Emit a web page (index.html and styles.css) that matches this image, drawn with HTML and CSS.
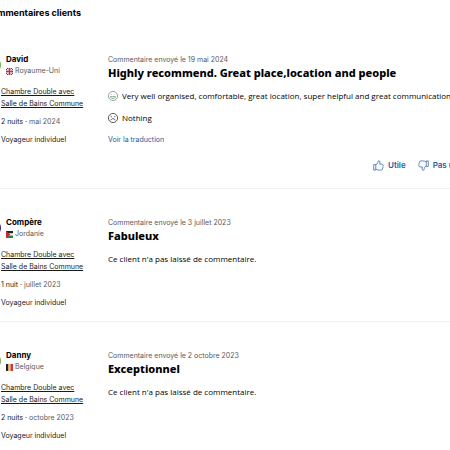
FILE: index.html
```html
<!DOCTYPE html>
<html lang="fr">
<head>
<meta charset="utf-8">
<title>Commentaires clients</title>
<link rel="stylesheet" href="styles.css">
</head>
<body>
<svg class="defs" aria-hidden="true">
  <symbol id="bed" viewBox="0 0 24 24"><path d="M2 19v-7h20v7M4 12V5h16v7M2 16h20"/></symbol>
  <symbol id="calendar" viewBox="0 0 24 24"><path d="M3 5h18v16H3zM3 10h18M8 2v5M16 2v5"/></symbol>
  <symbol id="person" viewBox="0 0 24 24"><circle cx="12" cy="7" r="5"/><path d="M3 22c0-10 18-10 18 0"/></symbol>
  <symbol id="happy" viewBox="0 0 24 24"><circle cx="12" cy="12" r="11"/><path d="M6 13.500h12c-.5 6-11.500 6-12 0zM8 8v1M16 8v1"/></symbol>
  <symbol id="sad" viewBox="0 0 24 24"><circle cx="12" cy="12" r="11"/><path d="M7 17.500c1-5 9-5 10 0M6.500 8l3 1.500M17.500 8l-3 1.500"/></symbol>
  <symbol id="thumb" viewBox="0 0 24 24"><path d="M1.500 10H6v12H1.500zM6 20c3 1.500 5 2 8 2h4c3 0 3.500-3 2.500-4 2-1 2-3 1-4 1.500-1.500 1-5-2-5h-5c1-3 1-7-1.500-7.500-2-.3-2 1.500-2.500 3.500C10 8 8 10 6 11"/></symbol>
</svg>
<main class="page">
  <h1 class="heading">Commentaires clients</h1>

  <article class="review">
    <div class="guest">
      <div class="profile">
        <span class="avatar green"></span>
        <div>
          <h2 class="name">David</h2>
          <p class="country">
            <svg class="flag" viewBox="0 0 14 14"><path fill="#35437f" d="M0 0h14v14H0z"/><path stroke="#fff" stroke-width="2" d="M0 0l14 14M14 0L0 14"/><path stroke="#fff" stroke-width="5" d="M7 0v14M0 7h14"/><path stroke="#d32840" stroke-width="3" d="M7 0v14M0 7h14"/></svg>
            Royaume-Uni
          </p>
        </div>
      </div>
      <div class="detail room"><svg class="mini"><use href="#bed"/></svg><a class="room-link" href="#">Chambre Double avec<br>Salle de Bains Commune</a></div>
      <p class="detail"><svg class="mini"><use href="#calendar"/></svg><span>2 nuits · <span class="muted">mai 2024</span></span></p>
      <p class="detail"><svg class="mini"><use href="#person"/></svg>Voyageur individuel</p>
    </div>
    <div class="comment">
      <p class="date">Commentaire envoyé le 19 mai 2024</p>
      <h3 class="title">Highly recommend. Great place,location and people</h3>
      <p class="text"><svg class="face good"><use href="#happy"/></svg>Very well organised, comfortable, great location, super helpful and great communication.</p>
      <p class="text"><svg class="face"><use href="#sad"/></svg>Nothing</p>
      <a class="translate" href="#">Voir la traduction</a>
      <div class="votes">
        <button class="vote" type="button"><svg class="thumb"><use href="#thumb"/></svg>Utile</button>
        <button class="vote" type="button"><svg class="thumb down"><use href="#thumb"/></svg>Pas utile</button>
      </div>
    </div>
  </article>

  <article class="review">
    <div class="guest">
      <div class="profile">
        <span class="avatar purple"></span>
        <div>
          <h2 class="name">Compère</h2>
          <p class="country">
            <svg class="flag" viewBox="0 0 14 14"><path fill="#222" d="M0 0h14v5H0z"/><path fill="#fff" d="M0 5h14v4H0z"/><path fill="#24833f" d="M0 9h14v5H0z"/><path fill="#d3222e" d="M0 0l9 7-9 7z"/></svg>
            Jordanie
          </p>
        </div>
      </div>
      <div class="detail room"><svg class="mini"><use href="#bed"/></svg><a class="room-link" href="#">Chambre Double avec<br>Salle de Bains Commune</a></div>
      <p class="detail"><svg class="mini"><use href="#calendar"/></svg><span>1 nuit · <span class="muted">juillet 2023</span></span></p>
      <p class="detail"><svg class="mini"><use href="#person"/></svg>Voyageur individuel</p>
    </div>
    <div class="comment">
      <p class="date">Commentaire envoyé le 3 juillet 2023</p>
      <h3 class="title">Fabuleux</h3>
      <p class="text">Ce client n'a pas laissé de commentaire.</p>
    </div>
  </article>

  <article class="review">
    <div class="guest">
      <div class="profile">
        <span class="avatar green"></span>
        <div>
          <h2 class="name">Danny</h2>
          <p class="country">
            <svg class="flag" viewBox="0 0 14 14"><path fill="#222" d="M0 0h5v14H0z"/><path fill="#f6c744" d="M5 0h4v14H5z"/><path fill="#d9303e" d="M9 0h5v14H9z"/></svg>
            Belgique
          </p>
        </div>
      </div>
      <div class="detail room"><svg class="mini"><use href="#bed"/></svg><a class="room-link" href="#">Chambre Double avec<br>Salle de Bains Commune</a></div>
      <p class="detail"><svg class="mini"><use href="#calendar"/></svg><span>2 nuits · <span class="muted">octobre 2023</span></span></p>
      <p class="detail"><svg class="mini"><use href="#person"/></svg>Voyageur individuel</p>
    </div>
    <div class="comment">
      <p class="date">Commentaire envoyé le 2 octobre 2023</p>
      <h3 class="title">Exceptionnel</h3>
      <p class="text">Ce client n'a pas laissé de commentaire.</p>
    </div>
  </article>
</main>
</body>
</html>
```
FILE: styles.css
```css
* {
  box-sizing: border-box;
}

body {
  margin: 0;
  background: #fff;
  color: #1a1a1a;
  font: 7px/12px Inter, sans-serif;
  white-space: nowrap;
  overflow: hidden;
}

h1, h2, h3, p {
  margin: 0;
}

svg {
  flex: none;
  fill: none;
  stroke: currentColor;
  stroke-width: 2;
}

.defs {
  display: none;
}

/* The list bleeds past the left edge of the window. */
.page {
  margin-left: -15px;
}

.heading {
  padding: 7px 0;
  font-size: 9px;
  line-height: 12px;
  font-weight: 700;
  color: #000;
}

.review {
  display: grid;
  grid-template-columns: 123px 1fr;
  padding: 27px 0 12px;
  border-bottom: 1px solid #f2f2f2;
}

.review:last-child {
  border-bottom: 0;
}

.profile {
  display: flex;
  align-items: center;
  gap: 5px;
  margin-bottom: 9px;
}

.avatar {
  width: 16px;
  height: 16px;
  border-radius: 50%;
}

.green {
  background: #78a955;
}

.purple {
  background: #35207f;
}

.name {
  font-size: 8px;
  line-height: 12px;
  font-weight: 700;
  color: #000;
}

.country {
  display: flex;
  align-items: center;
  gap: 2px;
  color: #595959;
}

.flag {
  width: 7px;
  height: 7px;
  stroke: none;
}

.detail {
  display: flex;
  align-items: center;
  gap: 7px;
  margin-top: 6px;
}

.room {
  align-items: flex-start;
}

.room-link {
  color: inherit;
  text-underline-offset: 1px;
}

.mini {
  width: 9px;
  height: 9px;
}

.muted,
.date {
  color: #595959;
}

.date {
  line-height: 14px;
}

.title {
  margin-bottom: 11px;
  font: 800 11px/12px "Noto Sans", sans-serif;
  color: #000;
}

.text {
  display: flex;
  align-items: center;
  gap: 4px;
  margin-bottom: 10px;
  font-family: "Open Sans", sans-serif;
  font-size: 8px;
  color: #000;
}

.face {
  width: 10px;
  height: 10px;
  stroke-width: 1.5;
}

.good {
  color: #4f7d58;
}

.translate {
  display: block;
  color: #1d5ba3;
  text-decoration: none;
}

.votes {
  display: flex;
  gap: 12px;
  margin: 13px 0 5px;
  padding-left: 265px;
}

.vote {
  display: flex;
  align-items: center;
  gap: 4px;
  padding: 0;
  border: 0;
  background: none;
  color: #1d5ba3;
  font: 600 8px/12px Inter, sans-serif;
}

.thumb {
  width: 11px;
  height: 11px;
  stroke-width: 1.5;
}

.down {
  transform: rotate(180deg);
}
```
